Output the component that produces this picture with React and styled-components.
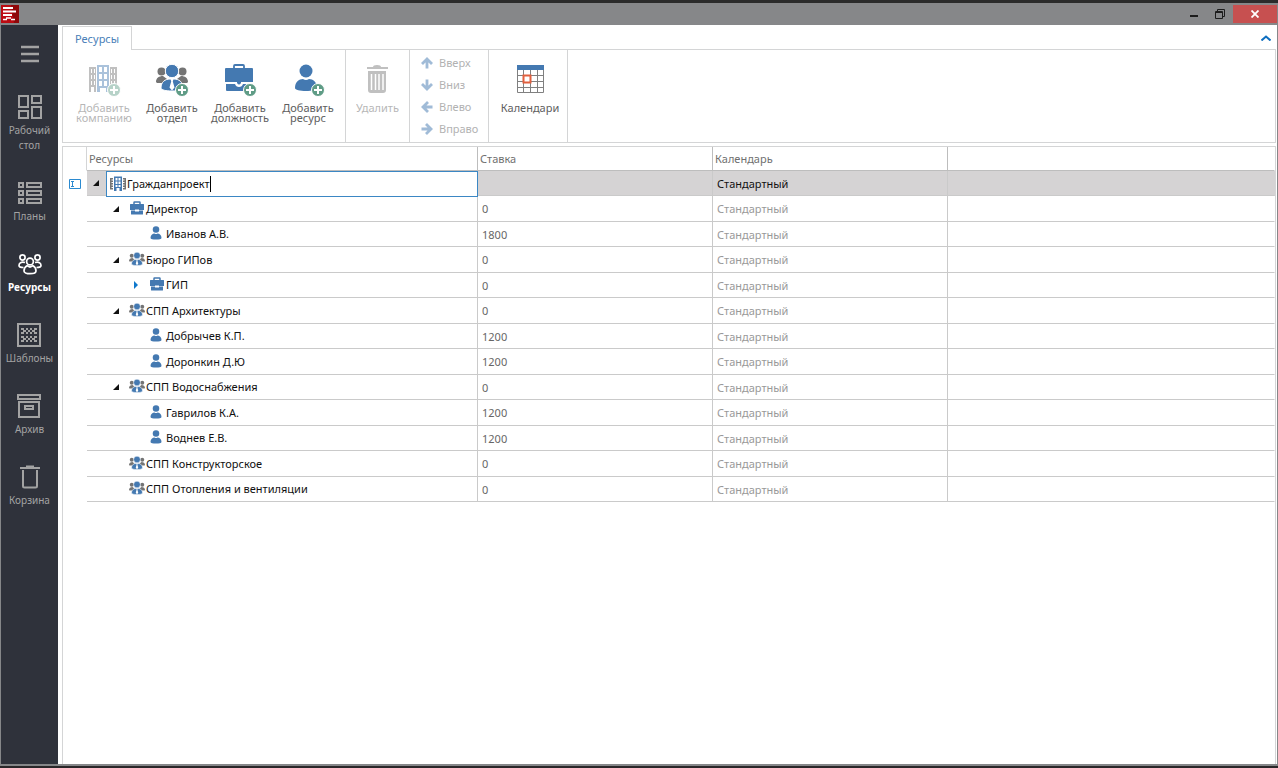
import React from 'react';
import styled, { createGlobalStyle, css } from 'styled-components';

const GlobalStyle = createGlobalStyle`
  * {
    box-sizing: border-box;
  }

  body {
    margin: 0;
    font-family: 'Noto Sans', 'Open Sans', sans-serif;
    font-size: 11px;
    line-height: 16px;
    color: #666;
    background: #868789;
  }

  button,
  input {
    font: inherit;
    color: inherit;
  }

  button {
    padding: 0;
    border: 0;
    background: none;
  }
`;

/* ---------- icons ---------- */

const BLUE = '#4479b1';
const GREY = '#747474';

const Logo = () => (
  <svg width="18" height="18" viewBox="0 0 18 18">
    <rect width="18" height="18" fill="#bb0b12" />
    <path d="M10 0h8v18h-5z" fill="#8f0709" />
    <path d="M2 3h10M2 6.500h13M2 10h9" stroke="#fff" strokeWidth="2" />
    <path d="M2 14.500h4M10 14.500h4M5 13h5" stroke="#fff" strokeWidth="1.600" />
  </svg>
);

const DesktopIcon = () => (
  <svg width="24" height="24" viewBox="0 0 24 24" fill="none" stroke="currentColor" strokeWidth="2">
    <path d="M1 1h9v11H1zM14 1h9v7h-9zM1 16h9v7H1zM14 12h9v11h-9z" />
  </svg>
);

const PlansIcon = () => (
  <svg width="24" height="24" viewBox="0 0 24 24" fill="none" stroke="currentColor" strokeWidth="2">
    <path d="M1 2h4v4H1zM9 2h14v4H9zM1 10h4v4H1zM9 10h14v4H9zM1 18h4v4H1zM9 18h14v4H9z" />
  </svg>
);

const TeamIcon = () => (
  <svg width="24" height="24" viewBox="0 0 24 24" fill="none" stroke="currentColor" strokeWidth="1.700">
    <circle cx="4.500" cy="5.500" r="2.600" />
    <circle cx="19.500" cy="5.500" r="2.600" />
    <circle cx="12" cy="9.500" r="3.400" />
    <path d="M6 19c0-3 1.500-4.500 3-5.300l3 1.300 3-1.300c1.500.8 3 2.300 3 5.300 0 1.500-2.500 2.700-6 2.700S6 20.500 6 19z" />
    <path d="M7 10.500C3 9.500 1 11 1 13.500c0 1.200 1.500 2 4.500 2M17 10.500c4-1 6 .5 6 3 0 1.200-1.500 2-4.500 2" />
  </svg>
);

const TemplatesIcon = () => (
  <svg width="24" height="24" viewBox="0 0 24 24" fill="none" stroke="currentColor">
    <path d="M1 1h22v22H1z" strokeWidth="2" />
    <path d="M4 6h3M9 6h2M13 6h2M17 6h3M6 8h3M11 8h2M15 8h3M4 10h3M9 10h2M13 10h2M17 10h3" strokeWidth="2" />
    <path d="M4 14h3M9 14h2M13 14h2M17 14h3M6 16h3M11 16h2M15 16h3M4 18h3M9 18h2M13 18h2M17 18h3" strokeWidth="2" />
  </svg>
);

const ArchiveIcon = () => (
  <svg width="24" height="24" viewBox="0 0 24 24" fill="none" stroke="currentColor" strokeWidth="2">
    <path d="M1 1h22v4H1zM2 8v15h20V8zM8 12h8v3H8z" />
  </svg>
);

const BinIcon = () => (
  <svg width="24" height="24" viewBox="0 0 24 24" fill="none" stroke="currentColor" strokeWidth="2">
    <path d="M2 3h20M8 1.500h8M5 5v16q0 1.500 1.500 1.500h11q1.500 0 1.500-1.500V5" />
  </svg>
);

const MenuIcon = () => (
  <svg width="18" height="18" viewBox="0 0 18 18" stroke="currentColor" strokeWidth="2.600">
    <path d="M0 2h18M0 9h18M0 16h18" />
  </svg>
);

const Plus = () => (
  <g>
    <circle cx="26" cy="26" r="6.500" fill="#5f9c86" stroke="#fff" />
    <path d="M26 22v8M22 26h8" stroke="#fff" strokeWidth="2" />
  </g>
);

const Buildings = () => (
  <g>
    <path d="M1 3h7v25H1zM22 3h7v25h-7z" fill={GREY} />
    <path d="M9 1h12v27H9z" fill={BLUE} />
    <path
      d="M3 5h1v4H3zM6 5h1v4H6zM3 11h1v4H3zM6 11h1v4H6zM3 17h1v4H3zM6 17h1v4H6zM3 23h3v5H3zM23 5h1v4h-1z
        M26 5h1v4h-1zM23 11h1v4h-1zM26 11h1v4h-1zM23 17h1v4h-1zM26 17h1v4h-1z"
      fill="#fff"
    />
    <path
      d="M11 3h3v5h-3zM16 3h3v5h-3zM11 10h3v5h-3zM16 10h3v5h-3zM11 17h3v5h-3zM16 17h3v5h-3zM12 24h6v4h-6z"
      fill="#fff"
    />
  </g>
);

/* simplified version that stays legible in the grid */
const SmallBuildings = () => (
  <g>
    <path
      d="M0 4h6v3H3v2h3v3H3v2h3v3H3v2h3v3H3v2h3v3H0zM32 4h-6v3h3v2h-3v3h3v2h-3v3h3v2h-3v3h3v2h-3v3h6z"
      fill={GREY}
    />
    <path d="M8 1h16v29h-5v-6h-6v6H8z" fill={BLUE} />
    <path d="M11 4h4v5h-4zM17 4h4v5h-4zM11 11h4v5h-4zM17 11h4v5h-4zM11 18h4v4h-4zM17 18h4v4h-4z" fill="#fff" />
  </g>
);

const Group = () => (
  <g>
    <g fill={GREY}>
      <circle cx="5.500" cy="7.500" r="4" />
      <circle cx="26.500" cy="7.500" r="4" />
      <path d="M0 18c0-4 3-6 7-6l4 3-4 4H1zM32 18c0-4-3-6-7-6l-4 3 4 4h6z" />
    </g>
    <circle cx="16" cy="7" r="6.700" fill={BLUE} stroke="#fff" />
    <path d="M5 24c0-6 4-9 9-9h4c5 0 9 3 9 9 0 2-5 3-11 3S5 26 5 24z" fill={BLUE} stroke="#fff" />
    <path d="M14.500 15h3l-.7 2.500 1.700 6L16 26.500l-2.500-3 1.700-6z" fill="#fff" />
  </g>
);

const Briefcase = () => (
  <g>
    <path d="M10 4V2q0-1 1-1h8q1 0 1 1v2" fill="none" stroke={BLUE} strokeWidth="1.800" />
    <path
      d="M2 4h26q1 0 1 1v13H1V5q0-1 1-1zM2 20h9q1 3 4 3t4-3h9v6q0 1-1 1H3q-1 0-1-1z"
      fill={BLUE}
    />
    <path d="M13 18h4v1q-2 3-4 0z" fill={BLUE} />
  </g>
);

const SmallBriefcase = () => (
  <g fill={BLUE}>
    <path d="M10 6V3q0-1 1-1h10q1 0 1 1v3" fill="none" stroke={BLUE} strokeWidth="3" />
    <path d="M3 6h26q1 0 1 1v9H2V7q0-1 1-1zM4 19h8v2h8v-2h8v7q0 1-1 1H5q-1 0-1-1zM2 16h28v2H20v-1h-8v1H2z" />
  </g>
);

const Person = () => (
  <g fill={BLUE}>
    <circle cx="14" cy="7" r="6.500" />
    <path d="M3 24c0-6 4-9 8-9q3 2 6 0c4 0 8 3 8 9 0 2-5 3-11 3S3 26 3 24z" />
  </g>
);

const drawings = {
  company: Buildings,
  department: Group,
  position: Briefcase,
  person: Person,
};

const smallDrawings = {
  ...drawings,
  company: SmallBuildings,
  position: SmallBriefcase,
};

const ActionIcon = ({ kind }) => {
  const Drawing = drawings[kind];
  return (
    <svg width="33" height="33" viewBox="0 0 33 33">
      <Drawing />
      <Plus />
    </svg>
  );
};

const RowIcon = ({ kind }) => {
  const Drawing = smallDrawings[kind];
  return (
    <svg width="16" height="16" viewBox="0 0 32 32">
      <Drawing />
    </svg>
  );
};

const TrashIcon = () => (
  <svg width="33" height="33" viewBox="0 0 33 33" fill={GREY}>
    <path d="M6 3h6q0-2 4-2t4 2h7v2H6zM7 7h18v19q0 3-3 3H10q-3 0-3-3z" />
    <path d="M10.500 10v16M14.500 10v16M18 10v16M22 10v16" stroke="#fff" strokeWidth="1.500" />
  </svg>
);

const CalendarIcon = () => (
  <svg width="33" height="33" viewBox="0 0 33 33">
    <path
      d="M3.500 6v22.500h26V6M3.500 11.500h26M3.500 17.500h26M3.500 23.500h26M9.500 6v22M16.500 6v22M23.500 6v22"
      fill="none"
      stroke="#808080"
    />
    <path d="M3 1h27v5H3z" fill={BLUE} />
    <path d="M9.500 11.500h7v7h-7z" fill="#fff" stroke="#e2603f" strokeWidth="2" />
  </svg>
);

const turns = { up: 0, right: 90, down: 180, left: 270 };

const ArrowIcon = ({ to }) => (
  <svg width="12" height="12" viewBox="0 0 12 12" fill="none" stroke={BLUE} strokeWidth="2.800">
    <path d="M6 11.500V2M1 7l5-5 5 5" transform={`rotate(${turns[to]} 6 6)`} />
  </svg>
);

const OpenMark = () => (
  <svg width="6" height="6" viewBox="0 0 6 6">
    <path d="M6 0v6H0z" fill="#111" />
  </svg>
);

const ClosedMark = () => (
  <svg width="6" height="8" viewBox="0 0 6 8">
    <path d="M1 0l4 4-4 4z" fill="#0f78cc" />
  </svg>
);

const EditMark = () => (
  <svg width="12" height="10" viewBox="0 0 12 10" fill="none" stroke="#2b8ad0">
    <path d="M.5.5h11v9H.5zM2 2.500h3M2 7.500h3M3.500 2.500v5" />
  </svg>
);

/* ---------- window frame ---------- */

const Window = styled.div`
  display: flex;
  flex-direction: column;
  min-height: 100vh;
  border-top: 3px solid #2b2b2b;
  border-bottom: 2px solid #2a2729;
`;

const TitleBar = styled.header`
  display: flex;
  align-items: center;
  justify-content: space-between;
  height: 22px;
  padding: 0 1px;
  background: #868789;
`;

const WindowButtons = styled.div`
  display: flex;
`;

const WindowButton = styled.button`
  display: grid;
  place-items: center;
  width: ${({ $close }) => ($close ? '44px' : '26px')};
  height: 18px;
  color: ${({ $close }) => ($close ? '#fff' : '#1c1c1c')};
  background: ${({ $close }) => ($close ? '#c75050' : 'transparent')};
`;

const Body = styled.div`
  display: flex;
  flex: 1;
  padding: 0 1px 2px;
  background: #868789;
`;

/* ---------- sidebar ---------- */

const Sidebar = styled.nav`
  display: flex;
  flex-direction: column;
  align-items: center;
  width: 57px;
  padding-top: 20px;
  color: #a3a3a3;
  background: #2f323b;
`;

const MenuButton = styled.button`
  height: 18px;
  margin-bottom: 32px;

  svg {
    display: block;
  }
`;

const SideLink = styled.a`
  display: flex;
  flex-direction: column;
  align-items: center;
  gap: 4px;
  max-width: 54px;
  margin-bottom: 28px;
  font-size: 10px;
  line-height: 15px;
  text-align: center;
  text-decoration: none;
  color: inherit;

  ${({ $active }) =>
    $active &&
    css`
      font-weight: 700;
      color: #fff;
    `}
`;

/* ---------- ribbon ---------- */

const Main = styled.main`
  flex: 1;
  display: flex;
  flex-direction: column;
  min-width: 0;
  padding: 1px 1px 0 4px;
  background: #fff;
`;

const Tabs = styled.div`
  display: flex;
  align-items: center;
  justify-content: space-between;
  height: 23px;
`;

const Tab = styled.button`
  position: relative;
  z-index: 1;
  height: 24px;
  padding: 0 12px;
  border: 1px solid #d4d5d6;
  border-bottom: 0;
  align-self: flex-start;
  color: #4a80b8;
  background: #fff;
`;

const CollapseButton = styled.button`
  display: flex;
  padding: 0 5px;
`;

const Ribbon = styled.section`
  display: flex;
  height: 94px;
  margin-bottom: 3px;
  border: 1px solid #d4d5d6;
`;

const RibbonGroup = styled.div`
  display: flex;
  padding: ${({ $wide }) => ($wide ? '14px 3px 0 7px' : '14px 2px 0')};
  border-right: 1px solid #d4d5d6;
`;

const RibbonButton = styled.button`
  display: flex;
  flex-direction: column;
  align-items: center;
  gap: 6px;
  width: ${({ $narrow }) => ($narrow ? '59px' : '68px')};
  line-height: 10px;
  color: #5e5e5e;

  &:disabled {
    opacity: 0.45;
  }
`;

const MoveGroup = styled.div`
  display: flex;
  flex-direction: column;
  width: 79px;
  padding: 2px 0 0 11px;
  border-right: 1px solid #d4d5d6;
`;

const MoveButton = styled.button`
  display: flex;
  align-items: center;
  gap: 6px;
  height: 22px;

  &:disabled {
    opacity: 0.5;
  }
`;

/* ---------- resource grid ---------- */

const GridPanel = styled.section`
  flex: 1;
  border: 1px solid #d4d5d6;
  border-bottom: 0;
`;

const Grid = styled.table`
  width: 100%;
  table-layout: fixed;
  border-collapse: separate;
  border-spacing: 0;
`;

const Col = styled.col`
  width: ${({ $width }) => $width || 'auto'};
`;

const HeadCell = styled.th`
  height: 24px;
  padding: 0 2px;
  font-weight: 400;
  text-align: left;
  color: #707070;
  border-right: 1px solid #bdbdbd;
  border-bottom: 1px solid #bdbdbd;

  &:first-child {
    border-right-color: #d4d5d6;
    border-bottom-color: transparent;
  }

  &:last-child {
    border-right-color: transparent;
  }
`;

const Cell = styled.td`
  padding: 1px 4px 0;
  white-space: nowrap;
  border-right: 1px solid #cacaca;
  border-bottom: 1px solid #cacaca;

  &:last-child {
    border-right-color: transparent;
  }
`;

const MarkCell = styled.td`
  padding: 0 0 0 6px;
  border-right: 1px solid transparent;

  svg {
    display: block;
  }
`;

const RateCell = styled(Cell)`
  color: #666;
`;

const CalendarCell = styled(Cell)`
  color: #999;
`;

const NameCell = styled(Cell)`
  padding: 0;
  color: #111;
`;

const Row = styled.tr`
  height: 25px;

  &:nth-child(even) {
    height: 26px;
  }

  ${({ $selected }) =>
    $selected &&
    css`
      ${Cell} {
        color: #111;
        background: #d5d3d4;
      }
    `}
`;

const NameBox = styled.div`
  display: flex;
  align-items: center;
  height: 24px;
  padding-left: ${({ $level }) => `${$level * 20}px`};
`;

const Toggle = styled.button`
  display: grid;
  place-items: center;
  width: 19px;
  height: 20px;
  padding-right: 2px;
`;

const IconBox = styled.span`
  display: flex;
  justify-content: flex-end;
  width: 20px;
  padding-right: 1px;
`;

const Editor = styled.label`
  position: relative;
  display: flex;
  flex: 1;
  align-items: center;
  height: 26px;
  margin: 0 -1px -1px 0;
  background: #fff;
  border: 1px solid #3b87c4;
`;

const EditorInput = styled.input`
  field-sizing: content;
  height: 20px;
  padding: 0;
  border: 0;
  outline: 0;
  background: transparent;
  caret-color: transparent;
`;

const Caret = styled.span`
  width: 1px;
  height: 16px;
  background: #000;
`;

const sections = [
  { label: 'Рабочий стол', icon: DesktopIcon },
  { label: 'Планы', icon: PlansIcon },
  { label: 'Ресурсы', icon: TeamIcon, active: true },
  { label: 'Шаблоны', icon: TemplatesIcon },
  { label: 'Архив', icon: ArchiveIcon },
  { label: 'Корзина', icon: BinIcon },
];

const addActions = [
  { label: 'Добавить компанию', kind: 'company', disabled: true },
  { label: 'Добавить отдел', kind: 'department' },
  { label: 'Добавить должность', kind: 'position' },
  { label: 'Добавить ресурс', kind: 'person' },
];

const moves = [
  { label: 'Вверх', to: 'up' },
  { label: 'Вниз', to: 'down' },
  { label: 'Влево', to: 'left' },
  { label: 'Вправо', to: 'right' },
];

const resources = [
  { name: 'Гражданпроект', kind: 'company', level: 0, open: true, rate: '', editing: true },
  { name: 'Директор', kind: 'position', level: 1, open: true, rate: '0' },
  { name: 'Иванов А.В.', kind: 'person', level: 2, rate: '1800' },
  { name: 'Бюро ГИПов', kind: 'department', level: 1, open: true, rate: '0' },
  { name: 'ГИП', kind: 'position', level: 2, open: false, rate: '0' },
  { name: 'СПП Архитектуры', kind: 'department', level: 1, open: true, rate: '0' },
  { name: 'Добрычев К.П.', kind: 'person', level: 2, rate: '1200' },
  { name: 'Доронкин Д.Ю', kind: 'person', level: 2, rate: '1200' },
  { name: 'СПП Водоснабжения', kind: 'department', level: 1, open: true, rate: '0' },
  { name: 'Гаврилов К.А.', kind: 'person', level: 2, rate: '1200' },
  { name: 'Воднев Е.В.', kind: 'person', level: 2, rate: '1200' },
  { name: 'СПП Конструкторское', kind: 'department', level: 1, rate: '0' },
  { name: 'СПП Отопления и вентиляции', kind: 'department', level: 1, rate: '0' },
];

const ResourceRow = ({ item }) => (
  <Row $selected={item.editing}>
    <MarkCell>{item.editing && <EditMark />}</MarkCell>
    <NameCell>
      <NameBox $level={item.level}>
        <Toggle aria-label={item.name} disabled={item.open === undefined}>
          {item.open === true && <OpenMark />}
          {item.open === false && <ClosedMark />}
        </Toggle>
        {item.editing ? (
          <Editor>
            <IconBox>
              <RowIcon kind={item.kind} />
            </IconBox>
            <EditorInput aria-label="Ресурсы" defaultValue={item.name} />
            <Caret />
          </Editor>
        ) : (
          <>
            <IconBox>
              <RowIcon kind={item.kind} />
            </IconBox>
            {item.name}
          </>
        )}
      </NameBox>
    </NameCell>
    <RateCell>{item.rate}</RateCell>
    <CalendarCell>Стандартный</CalendarCell>
    <Cell />
  </Row>
);

const App = () => (
  <>
    <GlobalStyle />
    <Window>
      <TitleBar>
        <Logo />
        <WindowButtons>
          <WindowButton aria-label="Свернуть">
            <svg width="8" height="8" viewBox="0 0 8 8">
              <path d="M0 5h8v2H0z" fill="currentColor" />
            </svg>
          </WindowButton>
          <WindowButton aria-label="Развернуть">
            <svg width="10" height="10" viewBox="0 0 10 10" fill="none" stroke="currentColor">
              <path d="M.5 2.500h7v7h-7zM.5 3.500h7M2.500 2V.5h7v7H8" />
            </svg>
          </WindowButton>
          <WindowButton $close aria-label="Закрыть">
            <svg width="8" height="8" viewBox="0 0 8 8" stroke="currentColor" strokeWidth="1.800">
              <path d="M.5.5l7 7M7.500.5l-7 7" />
            </svg>
          </WindowButton>
        </WindowButtons>
      </TitleBar>
      <Body>
        <Sidebar>
          <MenuButton aria-label="Меню">
            <MenuIcon />
          </MenuButton>
          {sections.map(({ label, icon: Icon, active }) => (
            <SideLink key={label} href="#" $active={active}>
              <Icon />
              {label}
            </SideLink>
          ))}
        </Sidebar>
        <Main>
          <Tabs>
            <Tab>Ресурсы</Tab>
            <CollapseButton aria-label="Свернуть ленту">
              <svg width="10" height="6" viewBox="0 0 10 6" fill="none" stroke="#0f6fc0" strokeWidth="2">
                <path d="M.5 5.500L5 1.500l4.500 4" />
              </svg>
            </CollapseButton>
          </Tabs>
          <Ribbon>
            <RibbonGroup $wide>
              {addActions.map(({ label, kind, disabled }) => (
                <RibbonButton key={label} disabled={disabled}>
                  <ActionIcon kind={kind} />
                  {label}
                </RibbonButton>
              ))}
            </RibbonGroup>
            <RibbonGroup>
              <RibbonButton $narrow disabled>
                <TrashIcon />
                Удалить
              </RibbonButton>
            </RibbonGroup>
            <MoveGroup>
              {moves.map(({ label, to }) => (
                <MoveButton key={label} disabled>
                  <ArrowIcon to={to} />
                  {label}
                </MoveButton>
              ))}
            </MoveGroup>
            <RibbonGroup $wide>
              <RibbonButton>
                <CalendarIcon />
                Календари
              </RibbonButton>
            </RibbonGroup>
          </Ribbon>
          <GridPanel>
            <Grid>
              <colgroup>
                <Col $width="24px" />
                <Col $width="391px" />
                <Col $width="235px" />
                <Col $width="235px" />
                <Col />
              </colgroup>
              <thead>
                <tr>
                  <HeadCell />
                  <HeadCell>Ресурсы</HeadCell>
                  <HeadCell>Ставка</HeadCell>
                  <HeadCell>Календарь</HeadCell>
                  <HeadCell />
                </tr>
              </thead>
              <tbody>
                {resources.map((item) => (
                  <ResourceRow key={item.name} item={item} />
                ))}
              </tbody>
            </Grid>
          </GridPanel>
        </Main>
      </Body>
    </Window>
  </>
);

export default App;
